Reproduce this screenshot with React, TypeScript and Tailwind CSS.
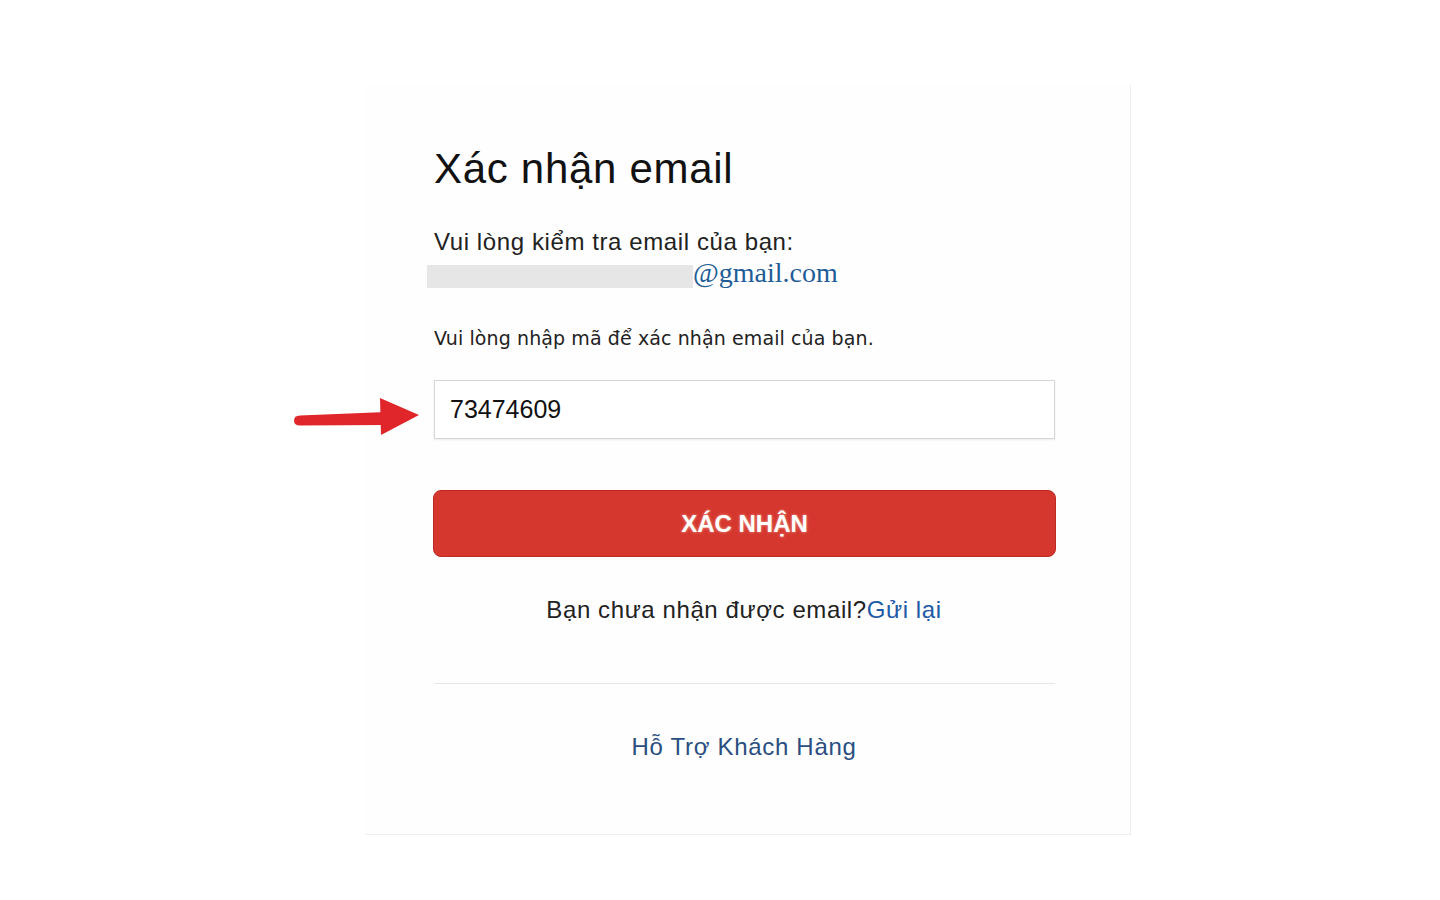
import { useState } from 'react';

function RedArrow() {
  return (
    <svg width="128" height="42" viewBox="0 0 128 42" className="absolute left-[-140px] top-[16px]">
      <path d="M6 19.5 L92 16 L92 29 L6 29.5 Q0 29.5 0 24.5 Q0 19.7 6 19.5 Z" fill="#e0262b" />
      <path d="M86 2 L125 19 L87 39 Z" fill="#e0262b" />
    </svg>
  );
}

export default function App() {
  const [code, setCode] = useState('73474609');

  return (
    <div className="min-h-screen bg-white font-['Liberation_Sans',Arial,sans-serif] text-[#111]">
      <div className="ml-[365px] pt-[85px]">
        <div className="w-[766px] h-[750px] bg-[#fefefe] border-r border-b border-[#efefef] pl-[69px] pr-[76px] pt-[63px]">
          <h1 className="text-[42px] leading-none tracking-[0.7px] text-[#111]">Xác nhận email</h1>

          <p className="mt-[40px] text-[24px] leading-none tracking-[0.6px] text-[#222]">
            Vui lòng kiểm tra email của bạn:
          </p>
          <div className="mt-[7px] flex items-end h-[27px] -ml-[7px]">
            <span className="h-[23px] w-[266px] bg-[#e6e6e6]" />
            <span className="font-['Liberation_Serif','Times_New_Roman',serif] text-[28px] leading-none text-[#1f5d96] pb-[1px]">
              @gmail.com
            </span>
          </div>

          <p className="mt-[41px] font-['DejaVu_Sans',Verdana,sans-serif] text-[19px] leading-none tracking-[0.1px] text-[#222]">
            Vui lòng nhập mã để xác nhận email của bạn.
          </p>

          <div className="relative mt-[32px]">
            <RedArrow />
            <input
              value={code}
              onChange={(e) => setCode(e.target.value)}
              className="block w-[621px] h-[59px] border border-[#d6d6d6] bg-white px-[15px] text-[25px] text-[#111] shadow-[0_1px_2px_rgba(0,0,0,0.08)] outline-none"
            />
          </div>

          <button className="mt-[51px] flex w-[623px] -ml-px h-[67px] items-center justify-center rounded-[8px] border border-[#bd2a24] bg-[#d5372f] text-[24px] font-bold text-white [text-shadow:0_0_3px_rgba(255,230,200,0.6)]">
            XÁC NHẬN
          </button>

          <p className="mt-[41px] text-center text-[24px] leading-none tracking-[0.6px] text-[#222]">
            Bạn chưa nhận được email?<a className="text-[#1d5aa6]">Gửi lại</a>
          </p>

          <div className="mt-[61px] h-px w-[621px] bg-[#e6e6e6]" />

          <p className="mt-[51px] text-center text-[24px] leading-none tracking-[0.7px] text-[#2a4e80]">Hỗ Trợ Khách Hàng</p>
        </div>
      </div>
    </div>
  );
}
